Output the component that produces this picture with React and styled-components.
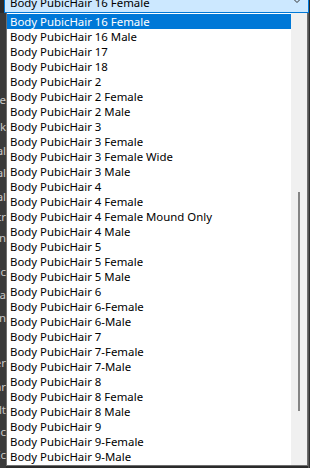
import styled, { createGlobalStyle } from 'styled-components'

const GlobalStyle = createGlobalStyle`
  html, body {
    margin: 0;
    padding: 0;
    background: #2b2b2b;
  }
  * {
    box-sizing: border-box;
  }
`

const items = [
  'Body PubicHair 16 Female',
  'Body PubicHair 16 Male',
  'Body PubicHair 17',
  'Body PubicHair 18',
  'Body PubicHair 2',
  'Body PubicHair 2 Female',
  'Body PubicHair 2 Male',
  'Body PubicHair 3',
  'Body PubicHair 3 Female',
  'Body PubicHair 3 Female Wide',
  'Body PubicHair 3 Male',
  'Body PubicHair 4',
  'Body PubicHair 4 Female',
  'Body PubicHair 4 Female Mound Only',
  'Body PubicHair 4 Male',
  'Body PubicHair 5',
  'Body PubicHair 5 Female',
  'Body PubicHair 5 Male',
  'Body PubicHair 6',
  'Body PubicHair 6-Female',
  'Body PubicHair 6-Male',
  'Body PubicHair 7',
  'Body PubicHair 7-Female',
  'Body PubicHair 7-Male',
  'Body PubicHair 8',
  'Body PubicHair 8 Female',
  'Body PubicHair 8 Male',
  'Body PubicHair 9',
  'Body PubicHair 9-Female',
  'Body PubicHair 9-Male',
]

// fragments of the panel behind the dropdown, [text, top]
const behind = [
  ['Size', 92],
  ['Mask', 119],
  ['Normal', 143],
  ['Normal', 165],
  ['Metal', 189],
  ['Distr', 209],
  ['Skin', 230],
  ['Specific', 264],
  ['Area', 287],
  ['Skin', 310],
  ['Under', 355],
  ['Bar', 379],
  ['Alt', 402],
  ['Body Bc', 424],
  ['Ic', 447],
]

const Page = styled.div`
  width: 310px;
  height: 468px;
  overflow: hidden;
  display: flex;
  flex-direction: column;
  font-family: 'Noto Sans', 'Open Sans', sans-serif;
  font-size: 11.4px;
`

const Combo = styled.div`
  margin-left: 4px;
  margin-right: 1px;
  height: 13px;
  flex: 0 0 13px;
  background: #cce8ff;
  border: 1px solid #0078d7;
  border-top: none;
  display: flex;
  align-items: flex-start;
  justify-content: space-between;
  overflow: hidden;
  padding: 0 5px 0 5px;
  color: #000;

  span {
    line-height: 15px;
    margin-top: -5px;
    white-space: nowrap;
  }
  svg {
    margin-top: -3px;
  }
`

const Body = styled.div`
  display: flex;
  flex: 1;
  min-height: 0;
`

const Behind = styled.div`
  width: 6px;
  flex: 0 0 6px;
  background: #3a3a3a;
  overflow: hidden;
  display: flex;
  flex-direction: column;
  align-items: flex-end;
`

const BehindLabel = styled.div`
  height: 16px;
  line-height: 16px;
  color: #c8c8c8;
  white-space: nowrap;
`

const List = styled.div`
  width: 302px;
  height: 453px;
  background: #fff;
  border: 1px solid #6e6e6e;
  border-top: none;
  display: flex;
`

const Rows = styled.div`
  flex: 1;
  padding-top: 1px;
  display: flex;
  flex-direction: column;
`

const Row = styled.div`
  height: 15px;
  line-height: 15px;
  padding-left: 3px;
  white-space: nowrap;
  color: ${({ $selected }) => ($selected ? '#fff' : '#000')};
  background: ${({ $selected }) => ($selected ? '#0078d7' : 'transparent')};
`

const Scrollbar = styled.div`
  width: 16px;
  flex: 0 0 16px;
  background: #f0f0f0;
  padding-top: 179px;
  padding-left: 7px;
`

const Thumb = styled.div`
  width: 2px;
  height: 219px;
  background: #858585;
`

const RightEdge = styled.div`
  flex: 1;
  background: #2f2f2f;
  border-left: 1px solid #555;
`

const Chevron = () => (
  <svg width='12' height='7' viewBox='0 0 12 7'>
    <path d='M1 0.5 L6 5.5 L11 0.5' fill='none' stroke='#333' strokeWidth='1' />
  </svg>
)

const App = () => {
  let last = 0
  return (
    <Page>
      <GlobalStyle />
      <Combo>
        <span>Body PubicHair 16 Female</span>
        <Chevron />
      </Combo>
      <Body>
        <Behind>
          {behind.map(([text, top]) => {
            const gap = top - 13 - last
            last = top - 13 + 16
            return (
              <BehindLabel key={top} style={{ marginTop: gap }}>
                {text}
              </BehindLabel>
            )
          })}
        </Behind>
        <List>
          <Rows>
            {items.map((item, i) => (
              <Row key={item} $selected={i === 0}>
                {item}
              </Row>
            ))}
          </Rows>
          <Scrollbar>
            <Thumb />
          </Scrollbar>
        </List>
        <RightEdge />
      </Body>
    </Page>
  )
}

export default App
